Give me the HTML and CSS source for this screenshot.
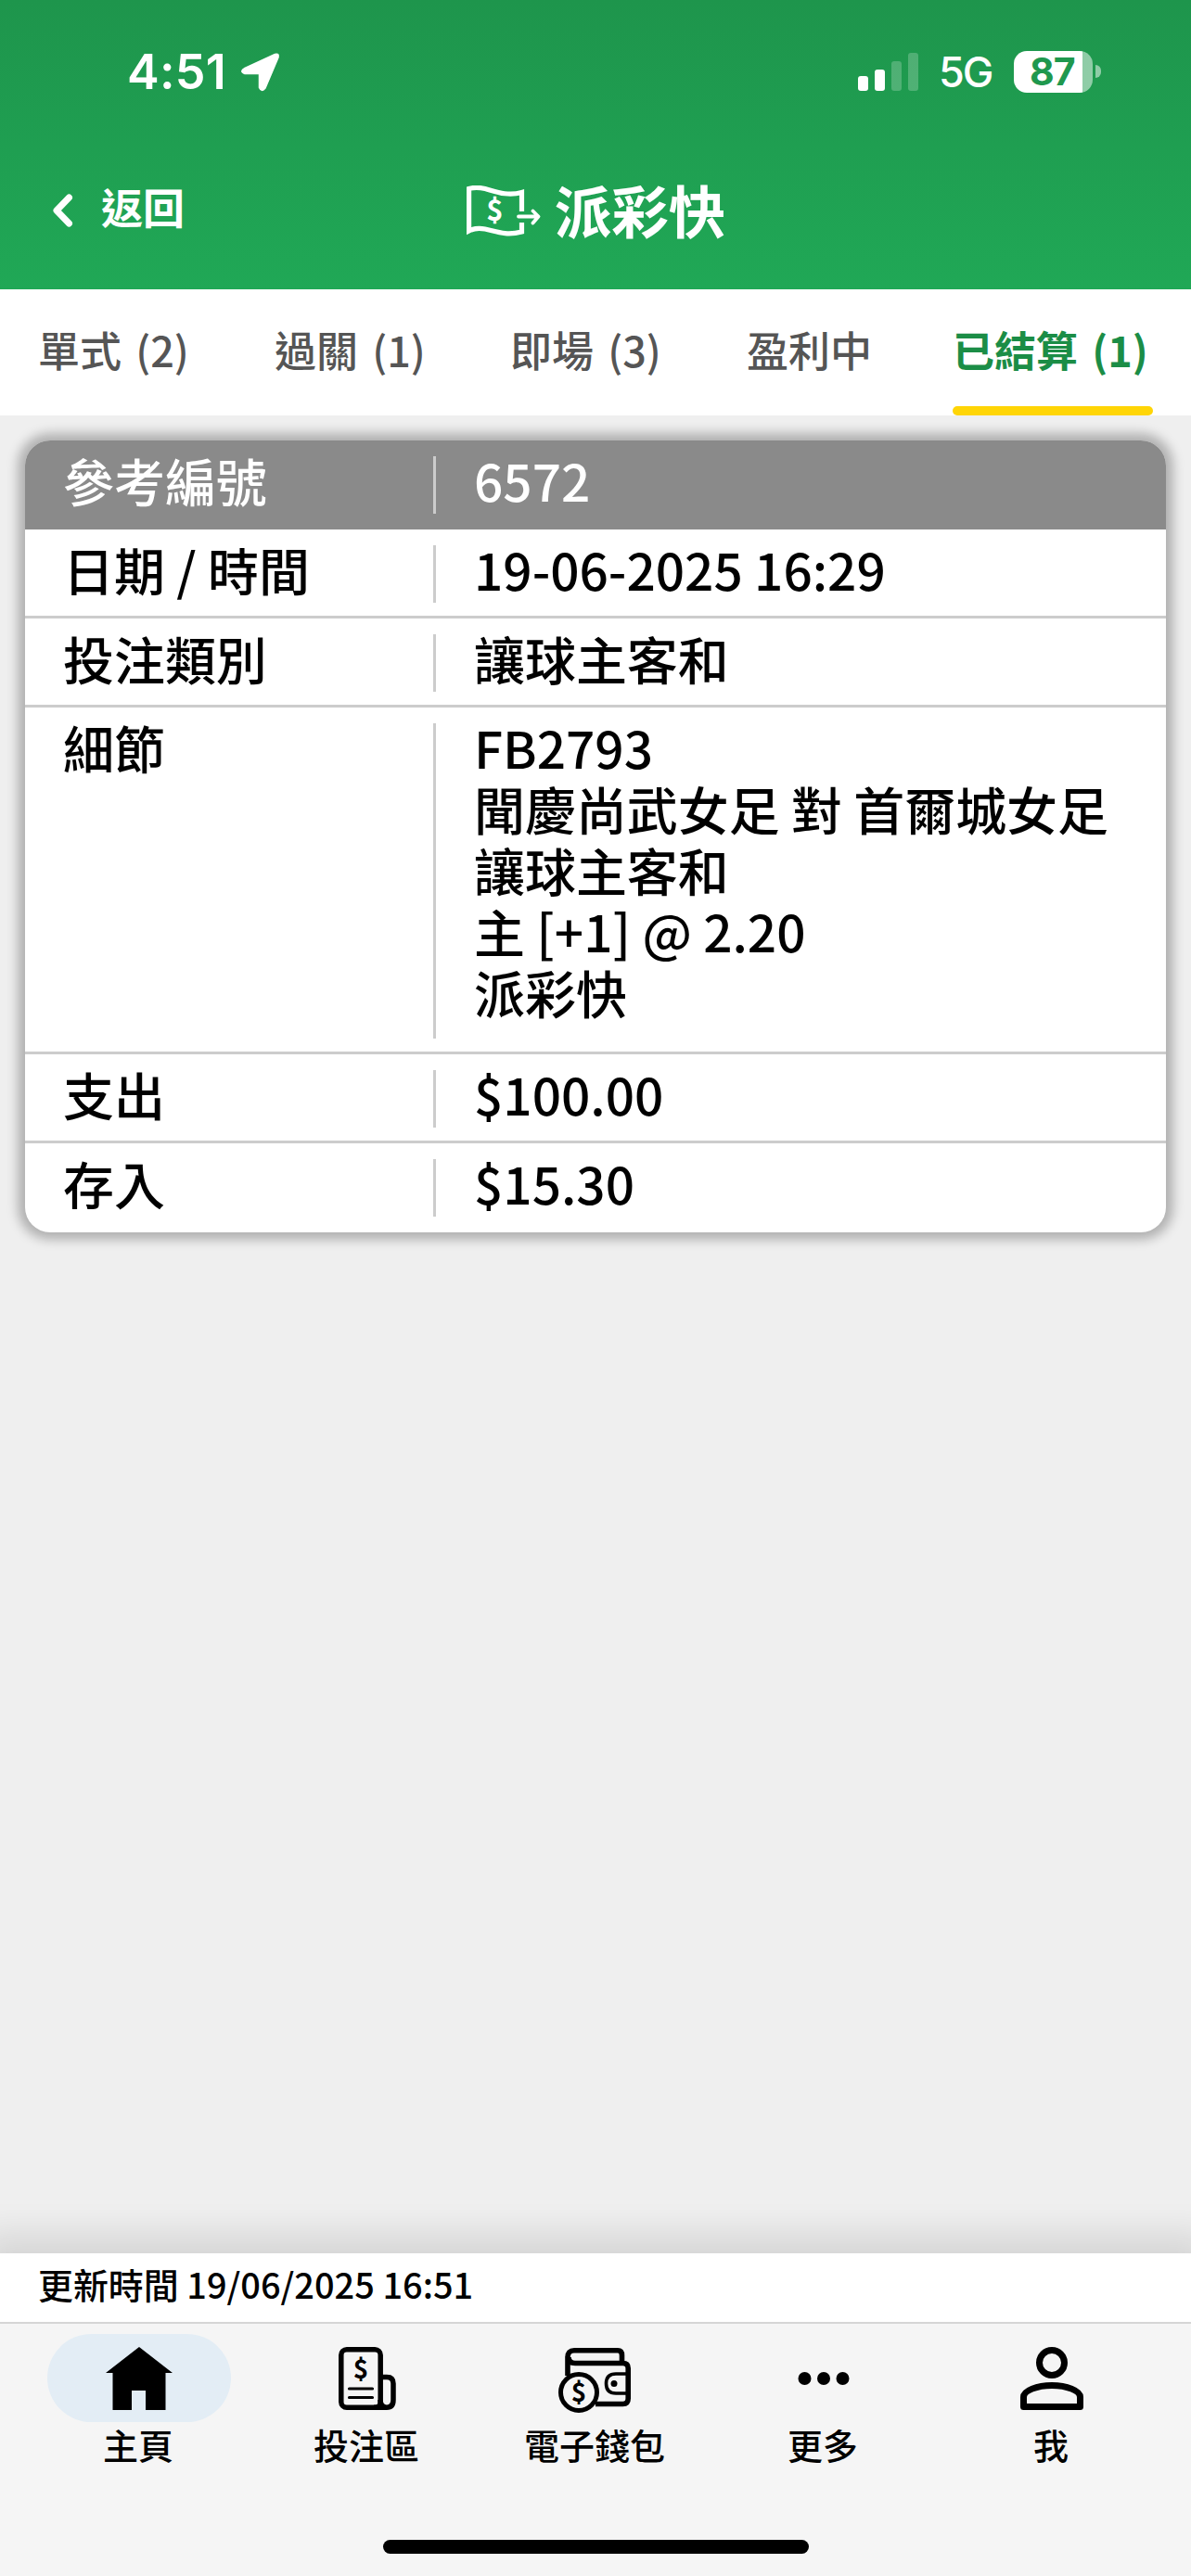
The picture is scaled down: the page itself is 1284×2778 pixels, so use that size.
FILE: index.html
```html
<!DOCTYPE html>
<html lang="zh-Hant">
<head>
<meta charset="utf-8">
<meta name="viewport" content="width=device-width">
<title>派彩快</title>
<link rel="stylesheet" href="styles.css">
</head>
<body>
<header class="header">
  <div class="status">
    <div class="status-left">
      <span class="clock">4:51</span>
      <svg class="location" width="42" height="43" viewBox="0 0 42 43"><path d="M4 17.500 36.500 2.500Q41 1 40 6L26 39Q22 44 19.500 38.500V23.500H4Q-2.500 21 4 17.500Z" fill="#fff" stroke="#fff" stroke-width="1.500" stroke-linejoin="round"/></svg>
    </div>
    <div class="status-right">
      <svg class="signal" width="65" height="41" viewBox="0 0 65 41" fill="#fff"><rect y="25" width="11" height="16" rx="3"/><rect x="18" y="18" width="11" height="23" rx="3"/><rect x="36" y="9" width="11" height="32" rx="3" opacity=".22"/><rect x="54" width="11" height="41" rx="3" opacity=".22"/></svg>
      <span class="network">5G</span>
      <span class="battery">87</span>
      <span class="battery-tip"></span>
    </div>
  </div>
  <div class="titlebar">
    <a class="back">
      <svg width="24" height="38" viewBox="0 0 24 38" fill="none" stroke="#fff" stroke-width="7" stroke-linecap="round" stroke-linejoin="round"><path d="M18.500 5 5 19 18.500 33"/></svg>
      <span>返回</span>
    </a>
    <h1 class="title">
      <svg width="80" height="56" viewBox="0 0 80 56" fill="none" stroke="#fff" stroke-width="5.200">
        <path d="M59.500 28V7.500C43 12 30 6 20 3.500Q10 1.200 2.600 3.500V49Q10 45 20 47C32 49.500 42 54.500 59.500 50V40"/>
        <path d="M56 33.500H77M71.500 27.500 77.500 33.500 71.500 40.500" stroke-width="3.800" stroke-linecap="round" stroke-linejoin="round"/>
        <text class="icon-money" x="30.500" y="38" font-size="31">$</text>
      </svg>
      <span>派彩快</span>
    </h1>
  </div>
</header>
<nav class="tabs">
  <a class="tab">單式 (2)</a>
  <a class="tab">過關 (1)</a>
  <a class="tab">即場 (3)</a>
  <a class="tab">盈利中</a>
  <a class="tab tab-active">已結算 (1)</a>
</nav>
<main class="content">
  <dl class="card">
    <div class="row row-head"><dt>參考編號</dt><dd>6572</dd></div>
    <div class="row"><dt>日期 / 時間</dt><dd>19-06-2025 16:29</dd></div>
    <div class="row"><dt>投注類別</dt><dd>讓球主客和</dd></div>
    <div class="row row-detail"><dt>細節</dt><dd>FB2793<br>聞慶尚武女足 對 首爾城女足<br>讓球主客和<br>主 [+1] @ 2.20<br>派彩快</dd></div>
    <div class="row"><dt>支出</dt><dd>$100.00</dd></div>
    <div class="row"><dt>存入</dt><dd>$15.30</dd></div>
  </dl>
</main>
<footer class="footer">
  <div class="updated">更新時間 19/06/2025 16:51</div>
  <nav class="menu">
    <a class="item item-active">
      <span class="icon"><svg width="72" height="68" viewBox="0 0 72 68"><path d="M36 0 72 28H64.500V68H43V47H28V68H7.500V28H0Z"/></svg></span>
      <span>主頁</span>
    </a>
    <a class="item">
      <span class="icon"><svg width="62" height="68" viewBox="0 0 62 68" fill="none" stroke="#000" stroke-width="5.500">
        <rect x="2.800" y="2.800" width="42.400" height="62.400" rx="6"/>
        <path d="M45 32.500H52Q59 32.500 59 39.500V57Q59 65.200 52 65.200T45 57M38 65.200H52"/>
        <path d="M11.500 45H36.500M11.500 54.500H36.500" stroke-width="3.200" stroke-linecap="round"/>
        <text class="icon-money dark" x="24" y="34" font-size="28">$</text>
      </svg></span>
      <span>投注區</span>
    </a>
    <a class="item">
      <span class="icon icon-wallet"><svg width="78" height="71" viewBox="0 0 78 71" fill="none" stroke="#000" stroke-width="5.600">
        <path d="M10 30V10Q10 2.800 17 2.800H64Q68.500 2.800 68.500 8V16.500M11 10Q11 16.500 18 16.500H69.500Q75.200 16.500 75.200 22V54.500Q75.200 60.500 69.500 60.500H40"/>
        <path d="M75 28H62Q51.500 28 51.500 38.500T62 49H75" stroke-width="3.600"/>
        <circle cx="60" cy="38.500" r="3.500" fill="#000" stroke="none"/>
        <circle cx="22" cy="48" r="19.500" fill="#f5f5f5" stroke-width="5"/>
        <text class="icon-money dark" x="22" y="58" font-size="28">$</text>
      </svg></span>
      <span>電子錢包</span>
    </a>
    <a class="item">
      <span class="icon"><svg width="56" height="68" viewBox="0 0 56 68"><circle cx="7.500" cy="34" r="7"/><circle cx="28" cy="34" r="7"/><circle cx="48.500" cy="34" r="7"/></svg></span>
      <span>更多</span>
    </a>
    <a class="item">
      <span class="icon"><svg width="68" height="68" viewBox="0 0 68 68" fill="none" stroke="#000" stroke-width="7" stroke-linejoin="round"><circle cx="34" cy="17" r="13.500"/><path d="M3.500 64.500V54C3.500 47 18 41.500 34 41.500S64.500 47 64.500 54V64.500Z"/></svg></span>
      <span>我</span>
    </a>
  </nav>
  <div class="home-indicator"></div>
</footer>
</body>
</html>
```
FILE: styles.css
```css
* { box-sizing: border-box; }

body {
  margin: 0;
  height: 2778px;
  display: flex;
  flex-direction: column;
  background: #efefef;
  color: #000;
  font-family: "Noto Sans CJK TC", "Noto Sans", sans-serif;
  font-weight: 500;
  overflow: hidden;
}

svg { display: block; flex: none; }

.icon-money {
  font-family: "Noto Sans CJK TC", sans-serif;
  font-weight: 700;
  text-anchor: middle;
  fill: #fff;
  stroke: none;
}
.icon-money.dark { fill: #000; }

/* Header */
.header {
  height: 312px;
  flex: none;
  background: linear-gradient(#1e954c, #20a856);
  color: #fff;
}

.status {
  height: 154px;
  padding: 0 97px 0 137px;
  display: flex;
  align-items: center;
  justify-content: space-between;
  font-family: Inter, sans-serif;
}
.status-left, .status-right { display: flex; align-items: center; }
.clock { width: 123px; font-size: 52px; font-weight: 600; letter-spacing: .3px; white-space: nowrap; }
.network { width: 103px; padding-left: 22px; font-size: 45px; font-weight: 500; letter-spacing: -2px; white-space: nowrap; }
.battery {
  width: 85px;
  height: 45px;
  border-radius: 14px;
  background: linear-gradient(90deg, #fff 74px, rgba(255, 255, 255, .5) 74px);
  color: #1f984e;
  font-size: 41px;
  font-weight: 700;
  line-height: 44px;
  letter-spacing: -1px;
  padding-left: 17px;
}
.battery-tip {
  width: 6px;
  height: 14px;
  margin-left: 3px;
  border-radius: 0 6px 6px 0;
  background: rgba(255, 255, 255, .5);
}

.titlebar {
  height: 158px;
  padding: 0 56px 15px;
  display: grid;
  grid-template-columns: 1fr auto 1fr;
  align-items: center;
}
.back {
  display: flex;
  align-items: center;
  gap: 29px;
  font-size: 45px;
  font-weight: 700;
  line-height: 60px;
}
.back span { padding-bottom: 6px; }
.back svg { margin-top: 2px; }
.title {
  margin: 0 0 0 1px;
  display: flex;
  align-items: center;
  gap: 15px;
  font-size: 61.500px;
  font-weight: 700;
  line-height: 80px;
}
.title svg { margin-top: 4px; }

/* Tabs */
.tabs {
  height: 136px;
  flex: none;
  padding-left: 41px;
  display: grid;
  grid-template-columns: 255px 254px 255px 222px 216px;
  background: #fff;
  color: #555;
  font-size: 45px;
  line-height: 130px;
  word-spacing: 5px;
  white-space: nowrap;
}
.tab-active {
  height: 136px;
  display: flex;
  flex-direction: column;
  color: #1b8d46;
  font-weight: 700;
}
.tab-active::after {
  content: "";
  height: 10px;
  margin-top: -4px;
  border-radius: 5px;
  background: #ffd506;
}

/* Bet record */
.content { flex: 1; padding: 27px; }
.card {
  margin: 0;
  border-radius: 27px;
  background: #fff;
  box-shadow: 0 0 12px 8px rgba(0, 0, 0, .26);
  overflow: hidden;
  font-size: 54.950px;
  line-height: 66px;
}
.row {
  height: 96px;
  display: grid;
  grid-template-columns: 440px 3px 1fr;
  border-bottom: 3px solid #ccc;
}
.row::before {
  content: "";
  grid-column: 2;
  grid-row: 1;
  margin: 17px 0 14px;
  background: #ccc;
}
.row-head, .row:last-child { border-bottom: 0; }
.row-head::before, .row:last-child::before { margin-bottom: 17px; }
.row-head { background: #8a8a8a; color: #fff; }
.row-detail { height: 374px; }
.row dt { grid-column: 1; grid-row: 1; padding: 9px 0 0 41px; }
.row dd { grid-column: 3; grid-row: 1; margin: 0; padding: 9px 0 0 41px; white-space: nowrap; }

/* Footer */
.footer {
  height: 348px;
  flex: none;
  background: #f5f5f5;
  box-shadow: 0 0 36px 20px rgba(0, 0, 0, .11);
}
.updated {
  height: 76px;
  padding-left: 41px;
  border-bottom: 2px solid #d5d5d5;
  background: #fff;
  font-size: 37.950px;
  line-height: 66px;
}
.menu {
  height: 233px;
  padding: 11px 28px 0 26px;
  display: grid;
  grid-template-columns: repeat(5, 246px);
  font-size: 38px;
  line-height: 48px;
}
.item { display: flex; flex-direction: column; align-items: center; }
.icon {
  width: 198px;
  height: 95px;
  margin-left: 2px;
  border-radius: 48px;
  display: flex;
  align-items: center;
  justify-content: center;
}
.icon-wallet { margin-left: 0; padding-top: 5px; }
.item-active .icon { background: #e3edf5; }
.home-indicator { width: 459px; height: 15px; margin: 0 auto; border-radius: 8px; background: #000; }
```
